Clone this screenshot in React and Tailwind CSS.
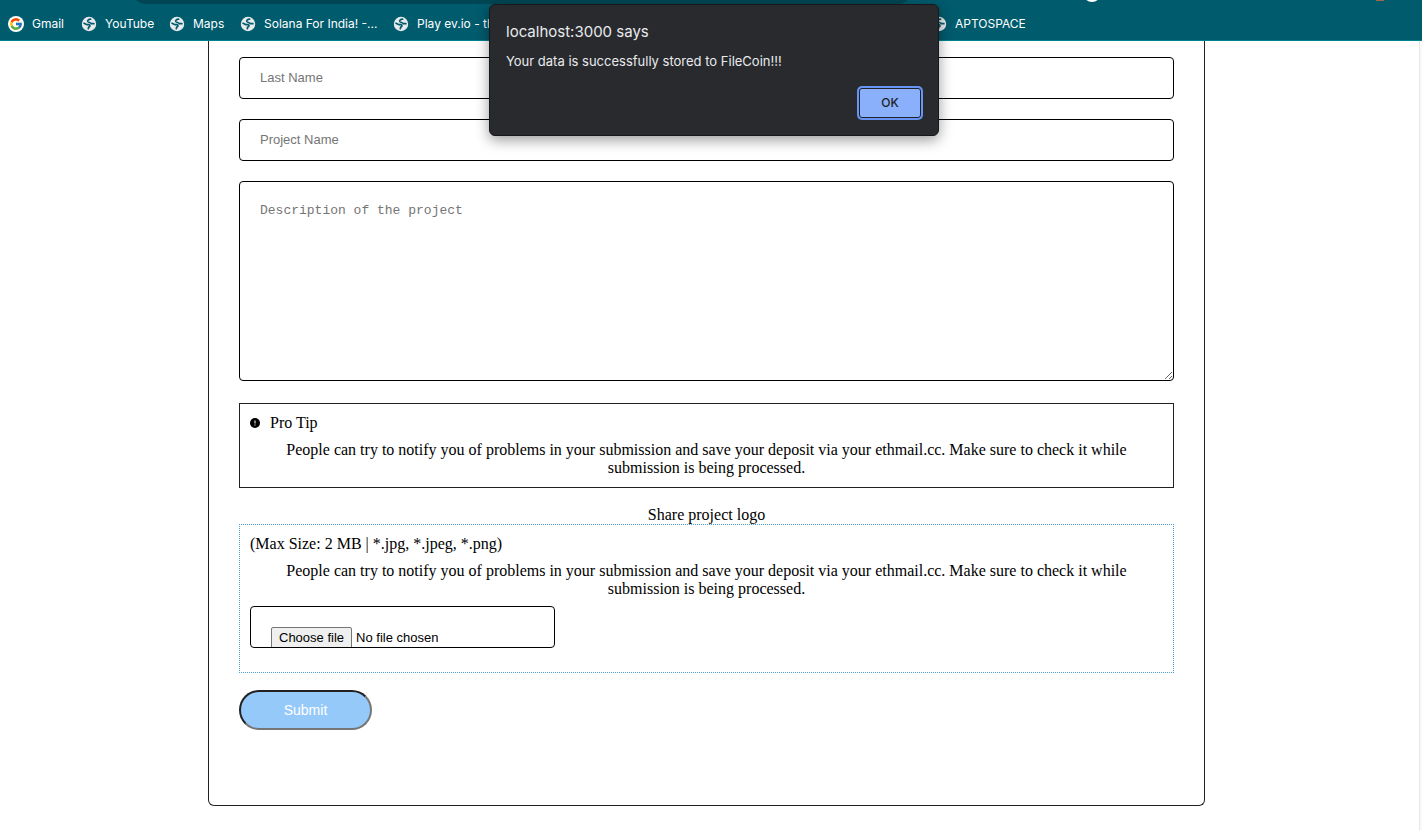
import React, { useState } from 'react';
import { FcGoogle } from 'react-icons/fc';

const BOOKMARKS = [
  { label: 'YouTube', width: 'w-[88px]' },
  { label: 'Maps', width: 'w-[71px]' },
  { label: 'Solana For India! -...', width: 'w-[153px]' },
  { label: 'Play ev.io - th', width: 'w-[538px]' },
  { label: 'APTOSPACE', width: 'w-[120px]' },
];

const TIP =
  'People can try to notify you of problems in your submission and save your deposit via your ethmail.cc. Make sure to check it while submission is being processed.';

function Globe() {
  return (
    <svg viewBox="0 0 16 16" className="size-4 shrink-0" aria-hidden="true">
      <circle cx="8" cy="8" r="7.2" fill="#e8eaed" />
      <g fill="none" stroke="#005b6d" strokeWidth="1.7" strokeLinecap="round" strokeLinejoin="round">
        <path d="M9.600 3.200C7.600 3.300 6.400 4.300 6.800 5.600C7.200 6.800 9.800 6.200 10.300 7.700H12.900" />
        <path d="M3 7.300L5.600 8.600H8.300C9.500 9.400 9 10.500 7.700 11L7.300 12.700" />
      </g>
    </svg>
  );
}

function BookmarksBar() {
  return (
    <header className="flex h-[41px] flex-col overflow-hidden border-b border-[#00828c] bg-[#005b6d] font-['Inter',sans-serif]">
      <div className="flex h-1 shrink-0 items-end overflow-hidden pl-[132px]">
        <div className="h-7 w-[780px] shrink-0 rounded-full bg-[#004655]" />
        <div className="mb-[2px] ml-[171px] size-[18px] shrink-0 rounded-full bg-white" />
        <div className="mb-[3px] ml-[275px] h-1 w-2 shrink-0 bg-[#a0674f]" />
      </div>
      <nav className="flex h-10 shrink-0 items-center pl-2 text-xs text-white">
        <a href="#gmail" className="flex w-[73px] shrink-0 items-center gap-2">
          <span className="flex size-4 items-center justify-center rounded-full bg-white">
            <FcGoogle className="size-[14px]" />
          </span>
          Gmail
        </a>
        {BOOKMARKS.map((b) => (
          <a key={b.label} href="#bookmark" className={`flex shrink-0 items-center gap-2 ${b.width}`}>
            <Globe />
            <span className="whitespace-nowrap">{b.label}</span>
          </a>
        ))}
      </nav>
    </header>
  );
}

function AlertDialog() {
  return (
    <div
      role="alertdialog"
      aria-labelledby="alert-title"
      aria-describedby="alert-text"
      className="absolute top-1 left-[489px] flex w-[450px] flex-col rounded-md border border-[#17181a] bg-[#292a2d] px-4 pt-[17px] pb-[17px] font-['Inter',sans-serif] text-[#e8eaed] shadow-[0_4px_14px_rgba(0,0,0,0.4)]"
    >
      <h2 id="alert-title" className="text-[15px] leading-5">localhost:3000 says</h2>
      <p id="alert-text" className="mt-[9px] text-[13px] leading-5">
        Your data is successfully stored to FileCoin!!!
      </p>
      <button
        type="button"
        className="mt-[17px] mr-px h-[30px] w-[62px] self-end rounded-[3px] border border-[#202124] bg-[#8ab0fb] text-xs font-medium text-[#202124] ring-2 ring-[#6695f6]"
      >
        OK
      </button>
    </div>
  );
}

function TipIcon() {
  return (
    <svg viewBox="0 0 10 10" className="size-[10px]" aria-hidden="true">
      <circle cx="5" cy="5" r="5" fill="#000" />
      <path d="M5 2.500v3M5 6.400v1.200" stroke="#bbb" strokeWidth="1.400" />
    </svg>
  );
}

function FilePicker() {
  const [fileName, setFileName] = useState('');

  return (
    <div className="relative mt-2 flex h-[42px] w-[305px] items-start overflow-hidden rounded border border-black px-5 pt-5 font-['Liberation_Sans',sans-serif] text-[13px]">
      <input
        id="logo"
        type="file"
        accept=".jpg,.jpeg,.png"
        className="sr-only"
        onChange={(e) => setFileName(e.target.files[0]?.name || '')}
      />
      <label
        htmlFor="logo"
        className="h-[22px] shrink-0 rounded-[2px] border border-[#767676] bg-[#efefef] px-[7px] leading-5"
      >
        Choose file
      </label>
      <span className="ml-1 truncate leading-[22px]">{fileName || 'No file chosen'}</span>
    </div>
  );
}

function App() {
  return (
    <div className="relative min-h-screen overflow-hidden bg-white font-['Liberation_Serif',serif] text-base leading-[18px] text-black">
      <BookmarksBar />
      <div className="flex min-h-[789px] items-stretch">
        <main className="grow pr-[214px] pb-6 pl-[208px]">
          <form className="flex flex-col rounded-b-md border border-t-0 border-[#212121] px-[30px] pt-4 pb-[75px]">
            <input
              type="text"
              aria-label="Last Name"
              placeholder="Last Name"
              className="h-[42px] rounded border border-black px-5 pb-[2px] font-['Liberation_Sans',sans-serif] text-[13px] placeholder:text-[#757575]"
            />
            <input
              type="text"
              aria-label="Project Name"
              placeholder="Project Name"
              className="mt-5 h-[42px] rounded border border-black px-5 pb-[2px] font-['Liberation_Sans',sans-serif] text-[13px] placeholder:text-[#757575]"
            />
            <textarea
              aria-label="Description of the project"
              placeholder="Description of the project"
              className="mt-5 h-[200px] rounded border border-black px-5 pt-[21px] pb-5 font-['Liberation_Mono',monospace] text-[13px] leading-4 placeholder:text-[#757575]"
            />

            {/* Pro tip */}
            <section className="mt-[22px] border border-[#212121] p-[10px]">
              <div className="flex items-center gap-[10px]">
                <TipIcon />
                <h3>Pro Tip</h3>
              </div>
              <p className="mt-[9px] px-[30px] text-center">{TIP}</p>
            </section>

            {/* Logo upload */}
            <h3 className="mt-[18px] text-center">Share project logo</h3>
            <section className="border border-dotted border-[#4b9fd5] p-[10px] pb-6">
              <p>(Max Size: 2 MB | *.jpg, *.jpeg, *.png)</p>
              <p className="mt-[9px] px-[30px] text-center">{TIP}</p>
              <FilePicker />
            </section>

            <button
              type="submit"
              className="mt-[17px] h-10 w-[133px] rounded-full border-2 border-t-[#212121] border-r-[#767676] border-b-[#767676] border-l-[#212121] bg-[#95c9fa] font-['Liberation_Sans',sans-serif] text-sm text-white"
            >
              Submit
            </button>
          </form>
        </main>
        <div className="w-[3px] shrink-0 border-l border-[#e6e6e6] bg-[#fafafa]" />
      </div>
      <AlertDialog />
    </div>
  );
}

export default App;
